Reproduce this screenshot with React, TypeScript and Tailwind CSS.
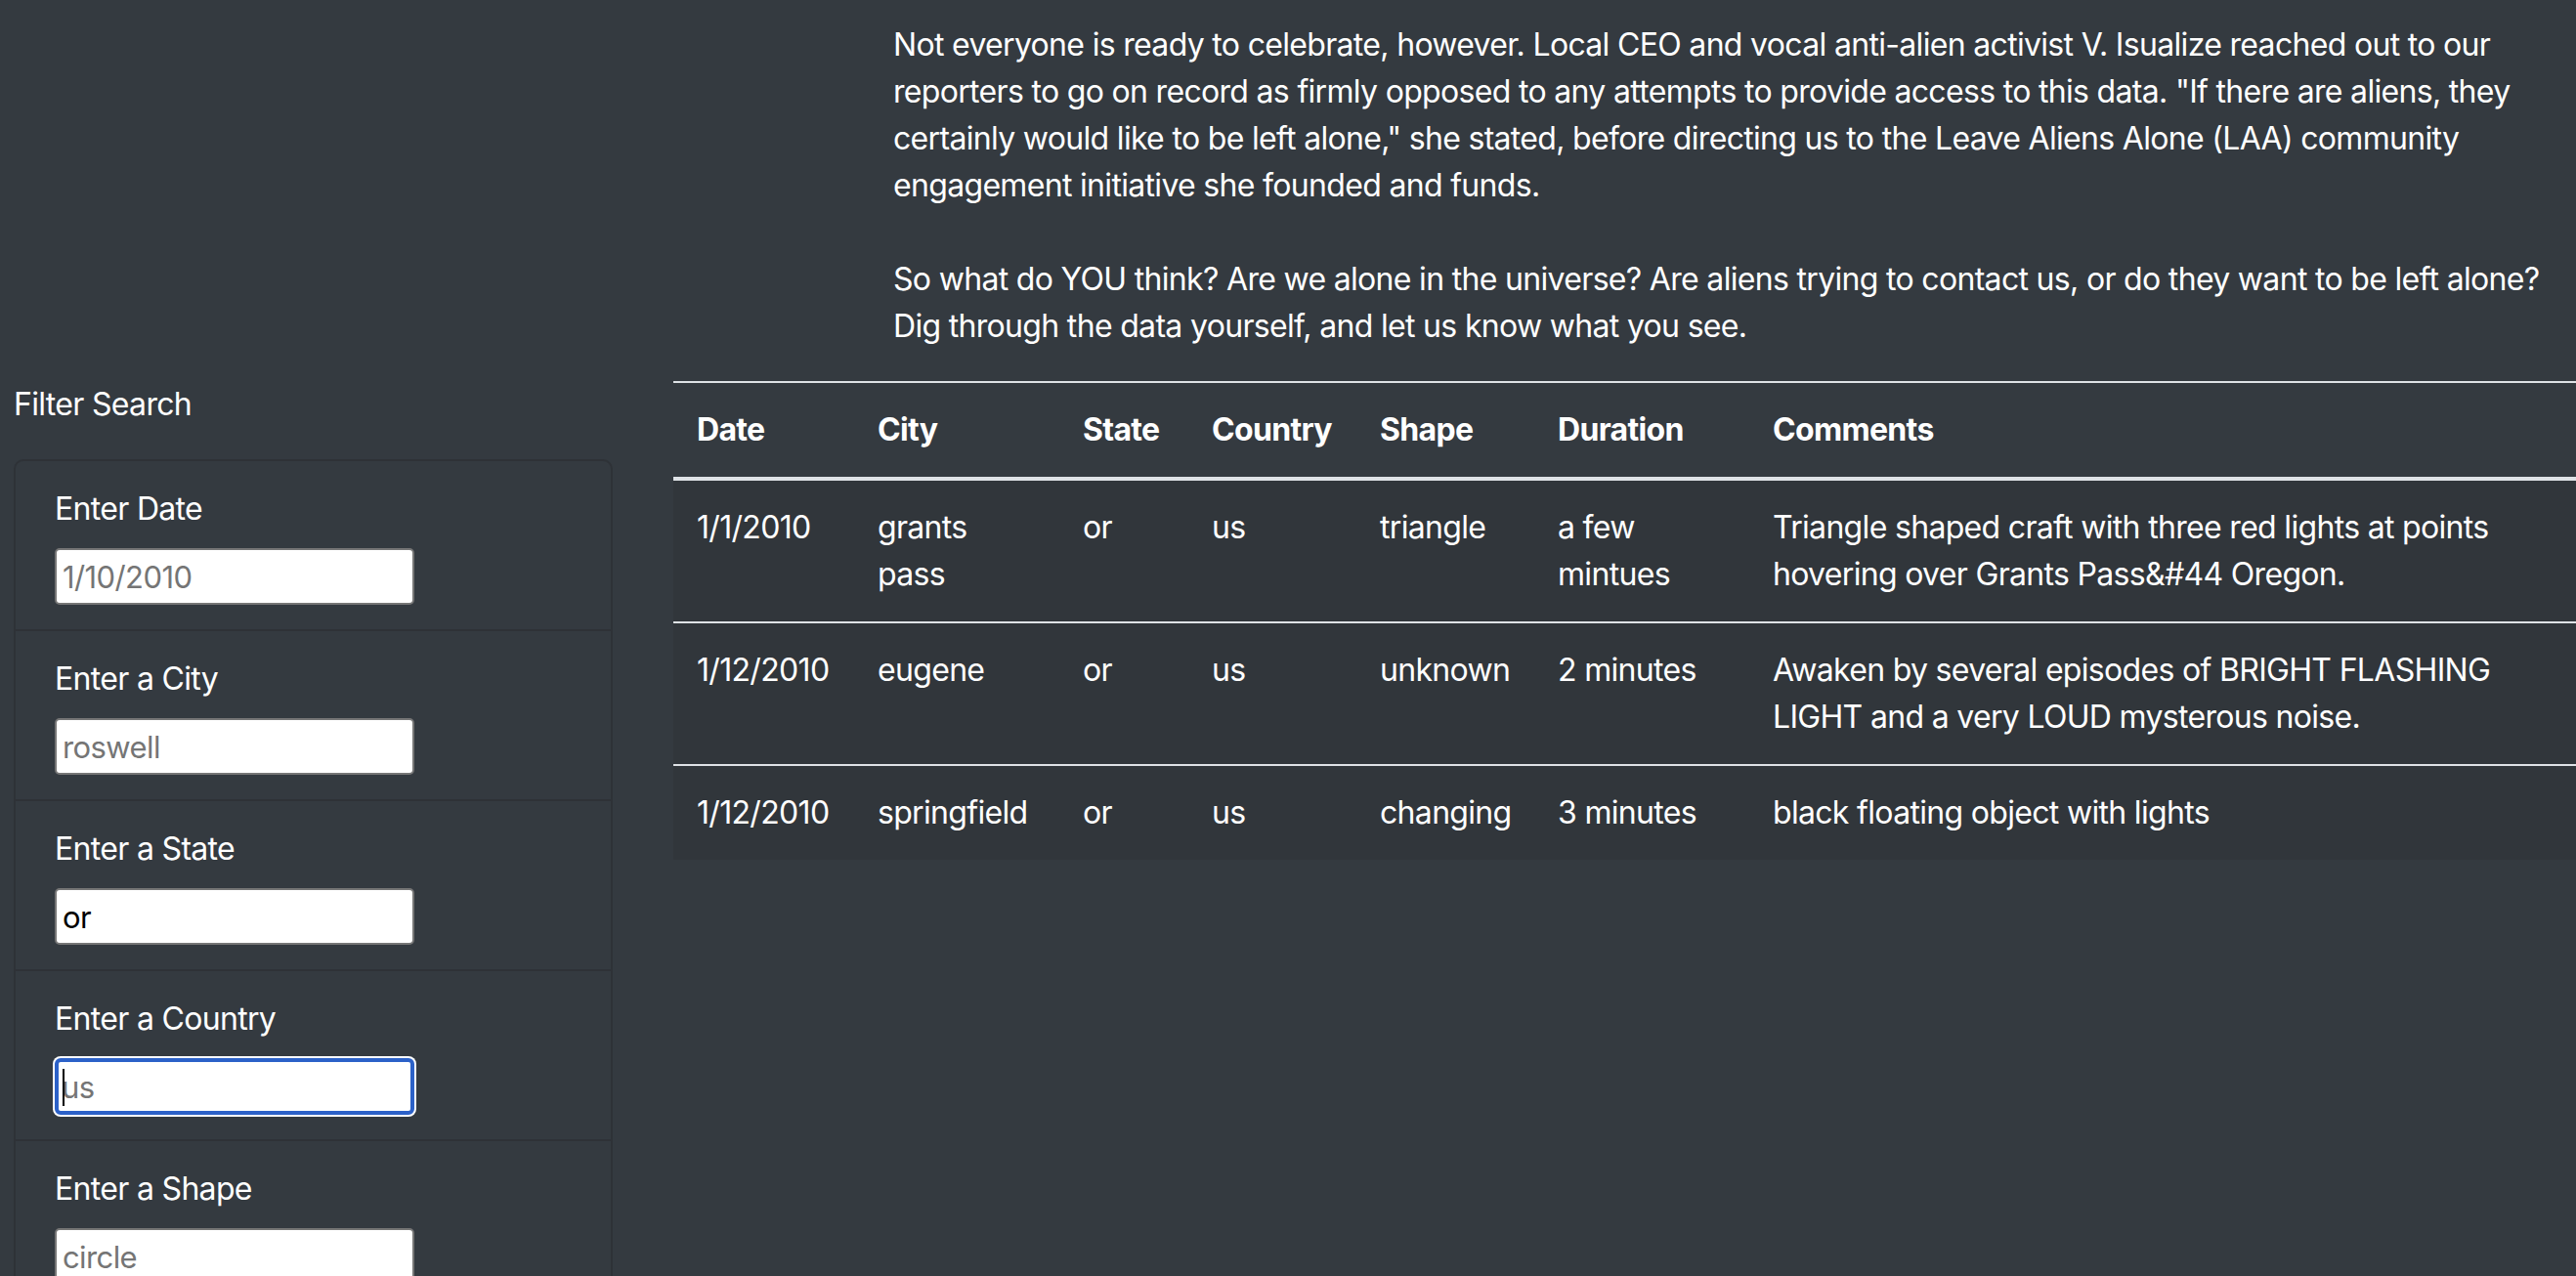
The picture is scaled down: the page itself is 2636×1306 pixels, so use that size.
import React from 'react';

interface Sighting {
  date: string;
  city: string;
  state: string;
  country: string;
  shape: string;
  duration: string;
  comments: string;
}

const SIGHTINGS: Sighting[] = [
  {
    date: '1/1/2010',
    city: 'grants pass',
    state: 'or',
    country: 'us',
    shape: 'triangle',
    duration: 'a few mintues',
    comments: 'Triangle shaped craft with three red lights at points hovering over Grants Pass&#44 Oregon.',
  },
  {
    date: '1/12/2010',
    city: 'eugene',
    state: 'or',
    country: 'us',
    shape: 'unknown',
    duration: '2 minutes',
    comments: 'Awaken by several episodes of BRIGHT FLASHING LIGHT and a very LOUD mysterous noise.',
  },
  {
    date: '1/12/2010',
    city: 'springfield',
    state: 'or',
    country: 'us',
    shape: 'changing',
    duration: '3 minutes',
    comments: 'black floating object with lights',
  },
];

const COLUMNS = [
  { label: 'Date', width: 'w-[185px]' },
  { label: 'City', width: 'w-[210px]' },
  { label: 'State', width: 'w-[132px]' },
  { label: 'Country', width: 'w-[172px]' },
  { label: 'Shape', width: 'w-[182px]' },
  { label: 'Duration', width: 'w-[220px]' },
  { label: 'Comments', width: 'w-[846px]' },
];

interface FilterField {
  label: string;
  placeholder: string;
  value?: string;
  focused?: boolean;
}

const FILTERS: FilterField[] = [
  { label: 'Enter Date', placeholder: '1/10/2010' },
  { label: 'Enter a City', placeholder: 'roswell' },
  { label: 'Enter a State', placeholder: 'state', value: 'or' },
  { label: 'Enter a Country', placeholder: 'us', focused: true },
  { label: 'Enter a Shape', placeholder: 'circle' },
];

const FilterItem = ({ field, first }: { field: FilterField; first: boolean }) => (
  <li className={`px-[40px] py-[25px] ${first ? '' : 'border-t-2 border-[#2e3237]'}`}>
    <label className="block mb-[16px] text-white">{field.label}</label>
    <div className="relative w-[368px]">
      <input
        type="text"
        readOnly
        defaultValue={field.value}
        placeholder={field.placeholder}
        className={`block w-[368px] h-[58px] bg-white text-black placeholder:text-[#757575] outline-none tracking-[-0.6px] text-[31px] ${
          field.focused
            ? 'border-[4px] border-[#2c61c8] rounded-[6px] pl-[3px] shadow-[0_0_0_2px_#ffffff]'
            : 'border-2 border-[#767676] rounded-[5px] pl-[6px]'
        }`}
      />
      {field.focused && <span className="absolute left-[8px] top-[11px] w-[2px] h-[38px] bg-black" />}
    </div>
  </li>
);

export default function App() {
  return (
    <div className="w-[2636px] h-[1306px] overflow-hidden bg-[#343a40] text-white font-['Inter','Noto_Sans',sans-serif] text-[32px] leading-[48px] tracking-[-0.68px]">
      <div className="pt-[22px] pl-[914px] pr-[30px]">
        <p className="mb-[48px]">
          Not everyone is ready to celebrate, however. Local CEO and vocal anti-alien activist V. Isualize reached out to
          our reporters to go on record as firmly opposed to any attempts to provide access to this data. "If there are
          aliens, they certainly would like to be left alone," she stated, before directing us to the Leave Aliens Alone
          (LAA) community engagement initiative she founded and funds.
        </p>
        <p className="mb-[32px]">
          So what do YOU think? Are we alone in the universe? Are aliens trying to contact us, or do they want to be left
          alone? Dig through the data yourself, and let us know what you see.
        </p>
      </div>

      <div className="flex">
        <aside className="w-[659px] shrink-0 pl-[14px]">
          <div className="mb-[32px]">Filter Search</div>
          <ul className="w-[613px] border-2 border-[#2e3237] rounded-[10px]">
            {FILTERS.map((field, i) => (
              <FilterItem key={field.label} field={field} first={i === 0} />
            ))}
          </ul>
        </aside>

        <div className="flex-1 pl-[30px]">
          <table className="w-[1947px] table-fixed border-collapse text-left">
            <thead>
              <tr>
                {COLUMNS.map((col) => (
                  <th
                    key={col.label}
                    className={`${col.width} px-[24px] py-[24px] font-bold align-bottom border-t-2 border-b-4 border-[#dee2e6]`}
                  >
                    {col.label}
                  </th>
                ))}
              </tr>
            </thead>
            <tbody className="bg-[#31363b]">
              {SIGHTINGS.map((s, i) => (
                <tr key={i} className={i === 0 ? '' : 'border-t-2 border-[#dee2e6]'}>
                  <td className="px-[24px] py-[24px] align-top">{s.date}</td>
                  <td className="px-[24px] py-[24px] align-top">{s.city}</td>
                  <td className="px-[24px] py-[24px] align-top">{s.state}</td>
                  <td className="px-[24px] py-[24px] align-top">{s.country}</td>
                  <td className="px-[24px] py-[24px] align-top">{s.shape}</td>
                  <td className="px-[24px] py-[24px] align-top">{s.duration}</td>
                  <td className="px-[24px] py-[24px] align-top">{s.comments}</td>
                </tr>
              ))}
            </tbody>
          </table>
        </div>
      </div>
    </div>
  );
}
